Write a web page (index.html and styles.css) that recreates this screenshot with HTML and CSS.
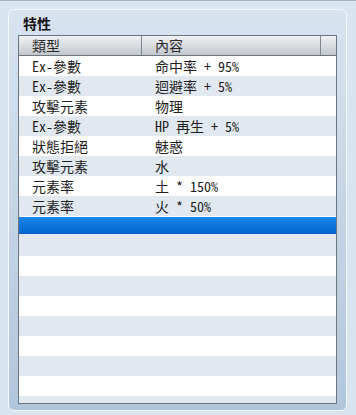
FILE: index.html
```html
<!DOCTYPE html>
<html lang="zh-Hant">
<head>
    <meta charset="UTF-8">
    <meta name="viewport" content="width=device-width, initial-scale=1.0">
    <title>特性</title>
    <link rel="stylesheet" href="styles.css">
</head>
<body>
    <!-- 特性面板 -->
    <div class="panel">
        <div class="panel-title">特性</div>

        <div class="grid-box">
            <!-- 表頭 -->
            <div class="grid-head">
                <div class="head-cell">類型</div>
                <div class="head-cell">內容</div>
                <div class="head-cell"></div>
            </div>

            <!-- 資料列 -->
            <div class="grid-body">
                <div class="row"><span class="c1">Ex-參數</span><span class="c2">命中率 + 95%</span></div>
                <div class="row"><span class="c1">Ex-參數</span><span class="c2">迴避率 + 5%</span></div>
                <div class="row"><span class="c1">攻擊元素</span><span class="c2">物理</span></div>
                <div class="row"><span class="c1">Ex-參數</span><span class="c2">HP 再生 + 5%</span></div>
                <div class="row"><span class="c1">狀態拒絕</span><span class="c2">魅惑</span></div>
                <div class="row"><span class="c1">攻擊元素</span><span class="c2">水</span></div>
                <div class="row"><span class="c1">元素率</span><span class="c2">土 * 150%</span></div>
                <div class="row"><span class="c1">元素率</span><span class="c2">火 * 50%</span></div>
                <div class="row selected"><span class="c1"></span><span class="c2"></span></div>
                <div class="row"></div>
                <div class="row"></div>
                <div class="row"></div>
                <div class="row"></div>
                <div class="row"></div>
                <div class="row"></div>
                <div class="row"></div>
                <div class="row"></div>
                <div class="row"></div>
            </div>
        </div>
    </div>
</body>
</html>
```

FILE: styles.css
```css
body {
    margin: 0;
    height: 415px;
    box-sizing: border-box;
    border-top: 1px solid #a9b3be;
    padding: 8px 9px 4px 8px;
    background: #d9e4f1;
    display: flex;
    flex-direction: column;
    overflow: hidden;
    font-family: "Noto Sans Mono CJK TC", "DejaVu Sans Mono", "Noto Sans CJK TC", monospace;
    color: #1e1e1e;
}

/* 外框面板 */
.panel {
    flex: 1;
    display: flex;
    flex-direction: column;
    min-height: 0;
    border: 1px solid #f4f8fc;
    border-radius: 6px;
    background: linear-gradient(to bottom, #d8e3f0, #b2c6db);
    padding: 3px 9px 6px 9px;
}

.panel-title {
    font-family: "Noto Sans CJK TC", sans-serif;
    font-weight: bold;
    font-size: 14px;
    line-height: 20px;
    padding-left: 5px;
    margin-bottom: 2px;
    color: #111;
}

/* 清單 */
.grid-box {
    flex: 1;
    min-height: 0;
    display: flex;
    flex-direction: column;
    border: 1px solid #6d757e;
    background: #ffffff;
    overflow: hidden;
}

.grid-head {
    display: grid;
    grid-template-columns: 123px 179px 1fr;
    height: 19px;
    border-bottom: 1px solid #6d757e;
    background: linear-gradient(to bottom, #eff1f3, #c3c8ce);
}

.head-cell {
    font-size: 14px;
    line-height: 19px;
    padding-left: 13px;
    border-right: 1px solid #7d858e;
    color: #2a2a2a;
}

.head-cell:last-child {
    border-right: none;
}

.grid-body {
    flex: 1;
    min-height: 0;
    overflow: hidden;
}

.row {
    display: grid;
    grid-template-columns: 123px 1fr;
    height: 20px;
    font-size: 14px;
    line-height: 20px;
    background: #ffffff;
}

.row:nth-child(even) {
    background: #e1e8f0;
}

.row span {
    padding-left: 13px;
    white-space: pre;
}

.row.selected {
    background: linear-gradient(to bottom, #1987ec, #0064ce);
    border-top: 1px solid #ffffff;
    border-bottom: 2px solid #e1e8f0;
    height: 17px;
    line-height: 17px;
}
```
